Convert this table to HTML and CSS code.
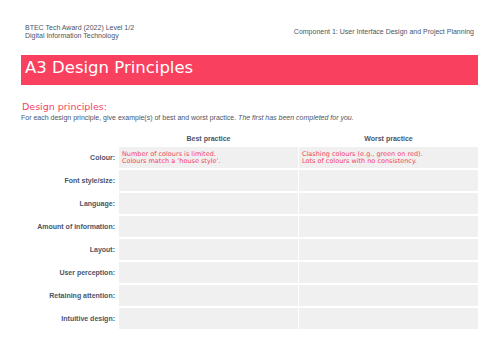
FILE: index.html
```html
<!DOCTYPE html>
<html lang="en">
<head>
<meta charset="utf-8">
<title>A3 Design Principles</title>
<link rel="stylesheet" href="styles.css">
</head>
<body>
<div class="page">
  <header class="top">
    <div class="course">BTEC Tech Award (2022) Level 1/2<br>Digital Information Technology</div>
    <div class="component">Component 1: User Interface Design and Project Planning</div>
  </header>
  <h1 class="banner">A3 Design Principles</h1>
  <h2 class="section">Design principles:</h2>
  <p class="intro">For each design principle, give example(s) of best and worst practice. <em>The first has been completed for you.</em></p>
  <div class="grid">
    <div class="head-empty"></div>
    <div class="head">Best practice</div>
    <div class="head">Worst practice</div>

    <div class="label">Colour:</div>
    <div class="cell filled">Number of colours is limited.<br>Colours match a ‘house style’.</div>
    <div class="cell filled">Clashing colours (e.g., green on red).<br>Lots of colours with no consistency.</div>

    <div class="label">Font style/size:</div>
    <div class="cell"></div>
    <div class="cell"></div>

    <div class="label">Language:</div>
    <div class="cell"></div>
    <div class="cell"></div>

    <div class="label">Amount of information:</div>
    <div class="cell"></div>
    <div class="cell"></div>

    <div class="label">Layout:</div>
    <div class="cell"></div>
    <div class="cell"></div>

    <div class="label">User perception:</div>
    <div class="cell"></div>
    <div class="cell"></div>

    <div class="label">Retaining attention:</div>
    <div class="cell"></div>
    <div class="cell"></div>

    <div class="label">Intuitive design:</div>
    <div class="cell"></div>
    <div class="cell"></div>
  </div>
</div>
</body>
</html>
```

FILE: styles.css
```css
html, body {
  margin: 0;
  padding: 0;
  background: #ffffff;
}

.page {
  width: 457px;
  margin-left: 21px;
  padding-top: 24px;
  font-family: "Liberation Sans", Arial, sans-serif;
  color: #4a5568;
}

.top {
  display: flex;
  justify-content: space-between;
  align-items: center;
  padding: 0 4px;
  font-size: 7px;
  line-height: 8.4px;
}

.banner {
  margin: 14px 0 0 0;
  padding: 3px 4px 8px 4px;
  background: #f9405f;
  color: #ffffff;
  font-family: "DejaVu Sans", sans-serif;
  font-weight: normal;
  font-size: 16.5px;
  line-height: 19.2px;
}

.section {
  margin: 15.5px 0 0 1px;
  color: #f43f5e;
  font-family: "DejaVu Sans", sans-serif;
  font-weight: normal;
  font-size: 9.5px;
  line-height: 11px;
}

.intro {
  margin: 2.5px 0 0 0;
  font-size: 7px;
  line-height: 8px;
}

.intro em {
  font-style: italic;
}

.grid {
  margin-top: 9px;
  display: grid;
  grid-template-columns: 97px 179px 179px;
  grid-auto-rows: 21px;
  grid-template-rows: 14px;
  column-gap: 1px;
  row-gap: 2px;
  background: #ffffff;
}

.head {
  display: flex;
  align-items: center;
  justify-content: center;
  font-weight: bold;
  font-size: 7px;
}

.label {
  display: flex;
  align-items: center;
  justify-content: flex-end;
  padding-right: 3px;
  font-weight: bold;
  font-size: 7px;
}

.cell {
  background: #f0f0f0;
  display: flex;
  align-items: center;
  padding-left: 3px;
  color: #f43f5e;
  font-family: "DejaVu Sans", sans-serif;
  font-size: 6.5px;
  line-height: 7px;
}
```
